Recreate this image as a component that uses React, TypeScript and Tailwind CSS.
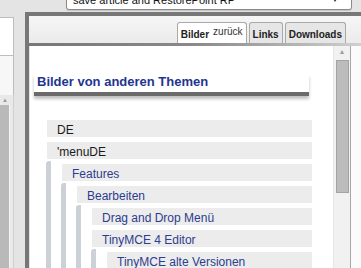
import React from 'react'

type Item = { label: string; blue?: boolean; children?: Item[] }

const tree: Item[] = [
  { label: 'DE' },
  {
    label: "'menuDE",
    children: [
      {
        label: 'Features',
        blue: true,
        children: [
          {
            label: 'Bearbeiten',
            blue: true,
            children: [
              { label: 'Drag and Drop Menü', blue: true },
              {
                label: 'TinyMCE 4 Editor',
                blue: true,
                children: [{ label: 'TinyMCE alte Versionen', blue: true }],
              },
            ],
          },
        ],
      },
    ],
  },
]

function TreeList({ items, nested }: { items: Item[]; nested?: boolean }) {
  return (
    <ul
      className={
        nested
          ? '-mt-[3px] pt-[3px] -ml-[1px] pl-[11px] border-l-[5px] border-[#ccd0d7] rounded-tl-[3px]'
          : ''
      }
    >
      {items.map((item) => (
        <li key={item.label}>
          <div
            className={`h-[17px] mb-[5px] pl-[10px] pt-[3px] bg-[#ececec] text-[12px] leading-[14px] whitespace-nowrap ${
              item.blue ? 'text-[#2d3c8e]' : 'text-[#1a1a1a]'
            }`}
          >
            {item.label}
          </div>
          {item.children && <TreeList items={item.children} nested />}
        </li>
      ))}
    </ul>
  )
}

function Tab({ label, active, extra }: { label: string; active?: boolean; extra?: string }) {
  return (
    <div
      className={`h-[21px] px-[3px] flex items-center gap-[4px] border border-b-0 border-[#a9a9a9] rounded-t-[3px] text-[10px] font-bold text-[#222] ${
        active ? 'bg-white' : 'bg-[#e6e6e6]'
      }`}
    >
      <span className="pt-[3px]">{label}</span>
      {extra && <span className="font-normal -mt-[3px] text-[#333]">{extra}</span>}
    </div>
  )
}

export default function App() {
  return (
    <div className="w-[361px] h-[268px] overflow-hidden bg-[#e4e4e4] flex flex-col font-['Liberation_Sans',Arial,sans-serif]">
      {/* select at top, partly scrolled away */}
      <div className="h-[12px] shrink-0 pl-[66px]">
        <div className="-mt-[11px] w-[286px] h-[21px] bg-white border border-[#8a8a8a] rounded-[3px] shadow-[0_1px_1px_rgba(0,0,0,0.15)] flex items-center justify-between pl-[6px] pr-[12px] text-[11px] text-[#111]">
          <span className="pt-[1px]">save article and RestorePoint RP</span>
          <span className="text-[8px]">▼</span>
        </div>
      </div>

      <div className="flex-1 flex min-h-0">
        {/* left panel */}
        <div className="w-[14px] shrink-0 flex flex-col pt-[5px]">
          <div className="h-[38px] bg-white border-r border-t border-[#bdbdbd]" />
          <div className="h-[40px] bg-[#f7f7f7] border-r border-t border-[#bdbdbd]" />
          <div className="flex-1 flex flex-col bg-[#e9e9e9] border-r border-[#cfcfcf]">
            <div className="h-[10px] text-[6px] text-[#999] leading-[10px] pl-[2px]">▲</div>
            <div className="flex-1 w-[10px] bg-[#b9b9b9] border-r border-[#f3f3f3]" />
          </div>
        </div>

        {/* main panel */}
        <div className="ml-[11px] flex-1 flex flex-col border-l-4 border-t-4 border-[#777]">
          <div className="h-[27px] shrink-0 bg-gradient-to-b from-[#f6f6f6] to-[#ebebeb] flex items-end justify-end gap-[2px] pr-[15px]">
            <Tab label="Bilder" extra="zurück" active />
            <Tab label="Links" />
            <Tab label="Downloads" />
          </div>
          <div className="h-[3px] shrink-0 bg-gradient-to-r from-[#777] via-[#8a8a8a] to-[#d0d0d0]" />

          <div className="flex-1 flex min-h-0">
            <div className="w-[304px] shrink-0 bg-white pl-[4px] pt-[28px] border-l border-[#e2e2e2]">
              <div className="w-[275px] pl-[3px] pb-[2px] border-b-4 border-[#6a6a6a] shadow-[0_3px_3px_rgba(0,0,0,0.25)]">
                <h2 className="text-[13px] leading-[16px] font-bold text-[#1f3590]">Bilder von anderen Themen</h2>
              </div>
              <div className="ml-[13px] mt-[24px] w-[265px]">
                <TreeList items={tree} />
              </div>
            </div>

            {/* scrollbar */}
            <div className="w-[17px] shrink-0 bg-[#f1f1f1] flex flex-col items-center border-l border-[#e6e6e6]">
              <div className="h-[14px] text-[7px] leading-[12px] text-[#a0a0a0]">▲</div>
              <div className="w-[13px] h-[133px] bg-[#bcbcbc] border border-[#a3a3a3]" />
            </div>

            <div className="flex-1 bg-[#fbfbfb] border-l border-[#a8a8a8]" />
          </div>
        </div>
      </div>
    </div>
  )
}
